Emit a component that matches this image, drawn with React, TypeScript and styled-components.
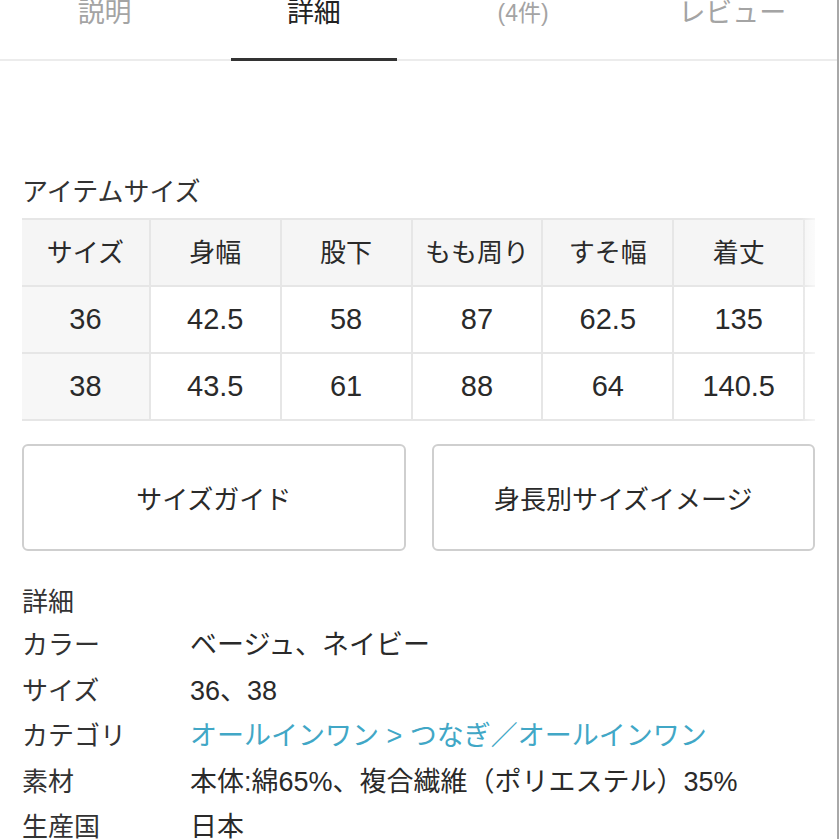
import styled, { createGlobalStyle } from 'styled-components'

const GlobalStyle = createGlobalStyle`
    html, body {
        margin: 0;
        padding: 0;
        background: #fff;
    }
    body {
        font-family: "Liberation Sans", "Noto Sans CJK JP", sans-serif;
        color: #222;
    }
`

type Tab = { label: string; small?: boolean }

const tabs: Array<Tab> = [
    { label: '説明' },
    { label: '詳細' },
    { label: '(4件)', small: true },
    { label: 'レビュー' },
]
const activeTab = 1

const headers = ['サイズ', '身幅', '股下', 'もも周り', 'すそ幅', '着丈', '']
const rows = [
    ['36', '42.5', '58', '87', '62.5', '135', ''],
    ['38', '43.5', '61', '88', '64', '140.5', ''],
]

type Spec = { label: string; value: string; link?: boolean }

const specs: Array<Spec> = [
    { label: 'カラー', value: 'ベージュ、ネイビー' },
    { label: 'サイズ', value: '36、38' },
    { label: 'カテゴリ', value: 'オールインワン > つなぎ／オールインワン', link: true },
    { label: '素材', value: '本体:綿65%、複合繊維（ポリエステル）35%' },
    { label: '生産国', value: '日本' },
]

function App() {
    return (
        <Page>
            <GlobalStyle />
            <TabBar>
                {tabs.map((tab, i) => (
                    <TabItem key={tab.label}>
                        <TabLabel $active={i === activeTab} $small={tab.small}>{tab.label}</TabLabel>
                        <Indicator $active={i === activeTab} />
                    </TabItem>
                ))}
            </TabBar>
            <Content>
                <Heading $top={115}>アイテムサイズ</Heading>
                <TableWrap>
                    <SizeTable>
                        <thead>
                            <tr>
                                {headers.map((h, i) => <HeadCell key={i}>{h}</HeadCell>)}
                            </tr>
                        </thead>
                        <tbody>
                            {rows.map(row => (
                                <tr key={row[0]}>
                                    {row.map((cell, i) => (
                                        <Cell key={i} $first={i === 0}>{cell}</Cell>
                                    ))}
                                </tr>
                            ))}
                        </tbody>
                    </SizeTable>
                </TableWrap>
                <Buttons>
                    <GuideButton>サイズガイド</GuideButton>
                    <GuideButton>身長別サイズイメージ</GuideButton>
                </Buttons>
                <Heading $top={35}>詳細</Heading>
                <SpecList>
                    {specs.map(spec => (
                        <SpecRow key={spec.label}>
                            <SpecLabel>{spec.label}</SpecLabel>
                            <SpecValue $link={spec.link}>{spec.value}</SpecValue>
                        </SpecRow>
                    ))}
                </SpecList>
            </Content>
        </Page>
    )
}

const Page = styled.div`
    width: 839px;
    height: 839px;
    overflow: hidden;
    box-sizing: border-box;
    border-right: 2px solid #a8a8a8;
`

const TabBar = styled.div`
    display: flex;
    margin-top: -8px;
    border-bottom: 2px solid #ececec;
`

const TabItem = styled.div`
    flex: 1;
    display: flex;
    flex-direction: column;
    align-items: center;
    justify-content: space-between;
    height: 67px;
`

const TabLabel = styled.div<{ $active: boolean; $small?: boolean }>`
    font-size: ${p => (p.$small ? '23px' : '27px')};
    line-height: 42px;
    color: ${p => (p.$active ? '#222' : '#a4a4a4')};
`

const Indicator = styled.div<{ $active: boolean }>`
    width: 166px;
    height: 3px;
    margin-bottom: -2px;
    background: ${p => (p.$active ? '#333' : 'transparent')};
`

const Content = styled.div`
    padding: 0 22px;
`

const Heading = styled.div<{ $top: number }>`
    font-size: 26px;
    line-height: 32px;
    color: #333;
    margin-top: ${p => p.$top}px;
    margin-bottom: 10px;
`

const TableWrap = styled.div`
    width: 793px;
    overflow: hidden;
    position: relative;

    &::after {
        content: '';
        position: absolute;
        top: 0;
        right: 0;
        width: 14px;
        height: 100%;
        background: linear-gradient(to right, rgba(255, 255, 255, 0), rgba(255, 255, 255, 0.6));
    }
`

const SizeTable = styled.table`
    border-collapse: collapse;
    table-layout: fixed;
    width: 914px;
    color: #2a2a2a;
    tr {
        height: 67px;
    }
`

const HeadCell = styled.th`
    width: 126px;
    font-size: 26px;
    font-weight: normal;
    text-align: center;
    background: #f5f5f5;
    border: 2px solid #e6e6e6;
    border-left: none;
    padding: 0 0 4px;
    &:first-child {
        width: 124px;
    }
    &:not(:first-child) {
        border-left: 2px solid #e6e6e6;
    }
`

const Cell = styled.td<{ $first: boolean }>`
    font-size: 29px;
    text-align: center;
    background: ${p => (p.$first ? '#f7f7f7' : '#fff')};
    border: 2px solid #e6e6e6;
    border-left: ${p => (p.$first ? 'none' : '2px solid #e6e6e6')};
    padding: 0;
`

const Buttons = styled.div`
    display: grid;
    grid-template-columns: 1fr 1fr;
    gap: 26px;
    margin-top: 23px;
`

const GuideButton = styled.button`
    height: 107px;
    background: #fff;
    border: 2px solid #cfcfcf;
    border-radius: 6px;
    font-family: inherit;
    font-size: 26px;
    color: #2a2a2a;
`

const SpecList = styled.div`
    display: flex;
    flex-direction: column;
    margin-top: -8px;
`

const SpecRow = styled.div`
    display: flex;
    align-items: center;
    height: 45.5px;
    font-size: 26px;
`

const SpecLabel = styled.div`
    width: 168px;
    flex-shrink: 0;
    color: #333;
`

const SpecValue = styled.div<{ $link?: boolean }>`
    font-size: 27px;
    color: ${p => (p.$link ? '#41a7c6' : '#2a2a2a')};
    white-space: nowrap;
`

export default App
